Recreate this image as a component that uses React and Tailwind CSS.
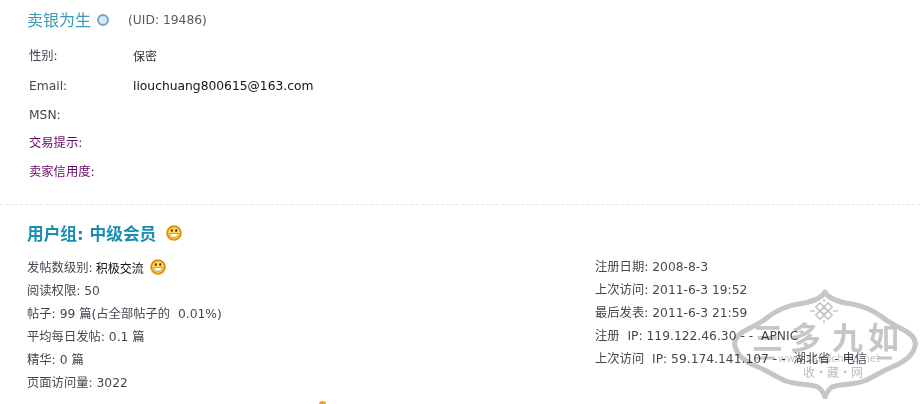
const font = { fontFamily: '"DejaVu Sans", "Noto Sans CJK SC", sans-serif' };

function Smile({ className }) {
  return (
    <svg viewBox="0 0 16 16" className={className}>
      <circle cx="8" cy="8" r="6.8" fill="#ffe25c" stroke="#ea8a0e" strokeWidth="2" />
      <ellipse cx="5.8" cy="5.6" rx="1" ry="1.3" fill="#3a2c08" />
      <ellipse cx="10.2" cy="5.6" rx="1" ry="1.3" fill="#3a2c08" />
      <path d="M3.6 8.400h8.800c-.3 2.700-2.200 3.900-4.400 3.900S3.900 11.100 3.600 8.400z" fill="#fff" stroke="#8a6a18" strokeWidth=".6" />
    </svg>
  );
}

function Watermark() {
  const g = "#c6c6c6";
  return (
    <svg viewBox="0 0 187 110" className="absolute left-[732px] top-[289px] w-[187px] h-[110px] mix-blend-multiply pointer-events-none">
      <path
        d="M93 3C97 10 106 13 120 15C132 17 142 22 150 28C156 33 162 36 170 40C180 45 185 50 183 57C181 68 170 74 160 78C150 82 142 88 132 92C122 96 106 95 100 98C97 100 95 103 93 108C91 103 89 100 86 98C80 95 64 96 54 92C44 88 36 82 26 78C16 74 5 68 3 57C1 50 6 45 16 40C24 36 30 33 36 28C44 22 54 17 66 15C80 13 89 10 93 3Z"
        fill="none"
        stroke={g}
        strokeWidth="5"
        strokeLinejoin="round"
      />
      <g fill="none" stroke={g} strokeWidth="1.6" transform="translate(-2 -2)">
        <rect x="87" y="17" width="6" height="6" transform="rotate(45 90 20)" />
        <rect x="95" y="17" width="6" height="6" transform="rotate(45 98 20)" />
        <rect x="87" y="25" width="6" height="6" transform="rotate(45 90 28)" />
        <rect x="95" y="25" width="6" height="6" transform="rotate(45 98 28)" />
        <rect x="91" y="21" width="6" height="6" transform="rotate(45 94 24)" />
        <path d="M80 24h5M103 24h5M94 12v3M94 33v3" />
      </g>
      <g fill={g} fontFamily='"Noto Sans CJK SC", sans-serif' fontWeight="700" fontSize="31">
        <text x="20" y="60">三</text>
        <text x="58" y="60">多</text>
        <text x="100" y="60">九</text>
        <text x="136" y="60">如</text>
      </g>
      <path d="M23 69h20M146 69h14" stroke={g} strokeWidth="3" />
      <text x="46" y="73" fill={g} fontSize="10.500" fontFamily='"DejaVu Sans", sans-serif'>www.sandchina.net</text>
      <text x="71" y="88" fill="#bdbdbd" fontSize="12" fontFamily='"Noto Sans CJK SC", serif'>收·藏·网</text>
    </svg>
  );
}

function Row({ label, value, purple, valueClass, h = "h-[29px]" }) {
  return (
    <div className={`flex ${h} items-center ${purple ? "text-[#660a66]" : "text-[#4a4450]"}`}>
      <span className="w-[104px]">{label}</span>
      {value && <span className={valueClass}>{value}</span>}
    </div>
  );
}

export default function App() {
  return (
    <div style={font} className="relative w-[920px] h-[404px] overflow-hidden bg-white text-[12.3px] text-[#4a4450] leading-none">
      <div className="pl-[27px] pt-[11px]">
        <div className="flex items-center h-[18px]">
          <span className="text-[16px] text-[#3a9ab8] translate-y-[1px]">卖银为生</span>
          <span className="ml-[6px] w-[12px] h-[12px] rounded-full border-2 border-[#7aa3c4] bg-[#d5e7f5]" />
          <span className="ml-[19px] text-[#5a5560]">(UID: 19486)</span>
        </div>
        <div className="pl-[2px] mt-[12px]">
          <Row h="h-[31px]" label="性别:" value="保密" valueClass="text-[#333] text-[12px]" />
          <Row label="Email:" value="liouchuang800615@163.com" valueClass="text-[#111]" />
          <Row h="h-[28px]" label="MSN:" />
          <Row label="交易提示:" purple />
          <Row label="卖家信用度:" purple />
        </div>
      </div>

      <div className="mt-[17px] border-t border-dashed border-[#e6e6e6]" />

      <div className="pl-[27px]">
        <div className="flex items-center h-[20px] mt-[19px]">
          <span className="text-[16.7px] font-bold text-[#1a8db2]">用户组: 中级会员</span>
          <Smile className="ml-[10px] w-[16px] h-[16px] -mt-[2px]" />
        </div>
        <div className="flex mt-[13px]">
          <div className="w-[568px] flex flex-col">
            <div className="flex items-center h-[23px]">
              <span>发帖数级别:</span>
              <span className="ml-[3px] text-[#111] text-[12px]">积极交流</span>
              <Smile className="ml-[6px] w-[16px] h-[16px] -mt-[4px]" />
            </div>
            <div className="flex items-center h-[23px]">阅读权限: 50</div>
            <div className="flex items-center h-[23px]">帖子: 99 篇(占全部帖子的&nbsp; 0.01%)</div>
            <div className="flex items-center h-[23px]">平均每日发帖: 0.1 篇</div>
            <div className="flex items-center h-[23px]">精华: 0 篇</div>
            <div className="flex items-center h-[23px]">页面访问量: 3022</div>
          </div>
          <div className="flex flex-col -mt-[1px] whitespace-nowrap">
            <div className="flex items-center h-[23px]">注册日期: 2008-8-3</div>
            <div className="flex items-center h-[23px]">上次访问: 2011-6-3 19:52</div>
            <div className="flex items-center h-[23px]">最后发表: 2011-6-3 21:59</div>
            <div className="flex items-center h-[23px]">注册&nbsp; IP: 119.122.46.30 - -&nbsp; APNIC</div>
            <div className="flex items-center h-[23px]">上次访问&nbsp; IP: 59.174.141.107 - -&nbsp; 湖北省 - 电信</div>
          </div>
        </div>
      </div>

      <Watermark />
      <div className="absolute left-[319px] top-[401px] w-[7px] h-[7px] rounded-full bg-[#f0a020]" />
    </div>
  );
}
